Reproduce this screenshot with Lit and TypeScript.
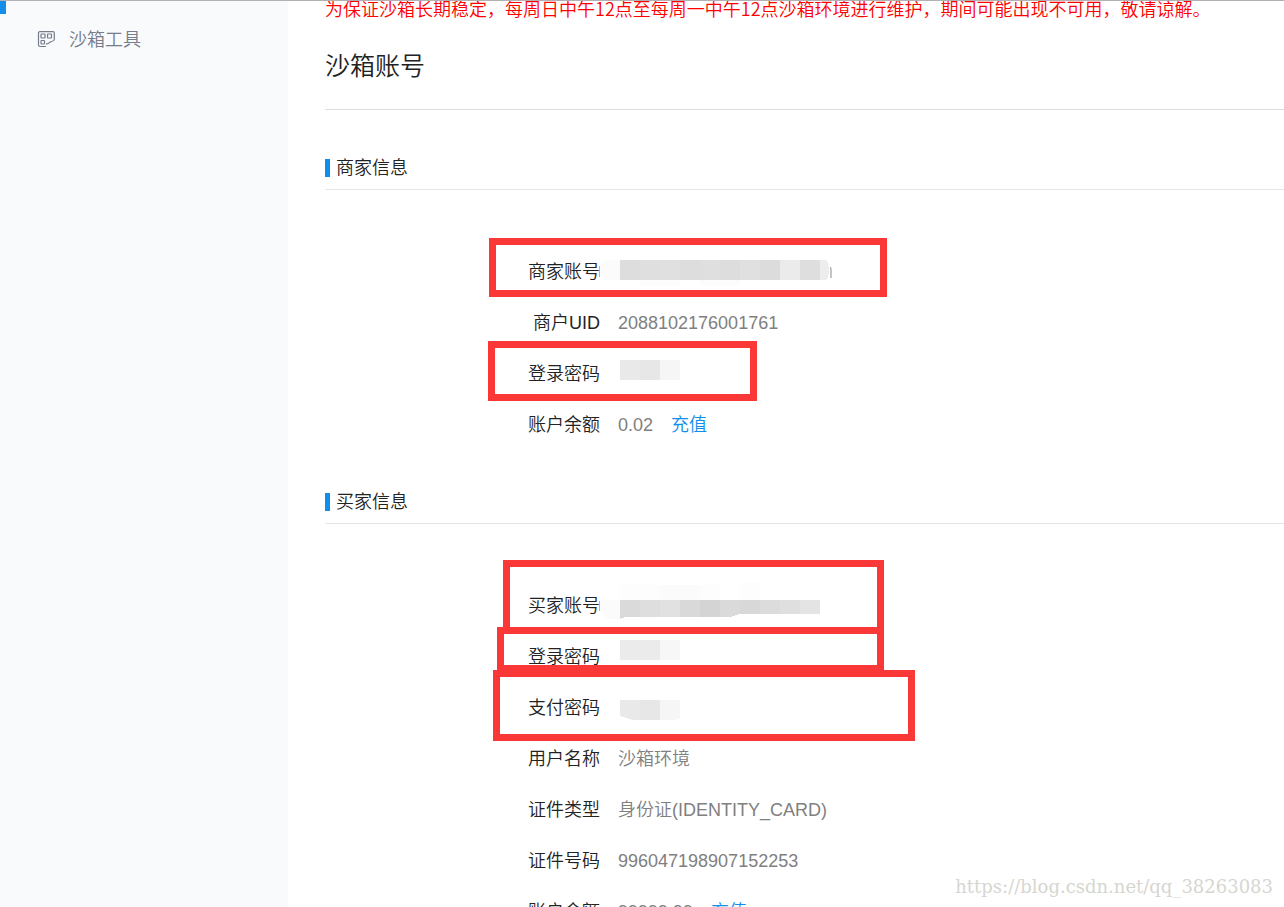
import { LitElement, html, css, svg, nothing } from "lit";
import { customElement, property } from "lit/decorators.js";

interface Field {
  label: string;
  value?: string;
  action?: string;
}

const merchant: Field[] = [
  { label: "商家账号" },
  { label: "商户UID", value: "2088102176001761" },
  { label: "登录密码" },
  { label: "账户余额", value: "0.02", action: "充值" },
];

const buyer: Field[] = [
  { label: "买家账号" },
  { label: "登录密码" },
  { label: "支付密码" },
  { label: "用户名称", value: "沙箱环境" },
  { label: "证件类型", value: "身份证(IDENTITY_CARD)" },
  { label: "证件号码", value: "996047198907152253" },
  { label: "账户余额", value: "99999.99", action: "充值" },
];

/* Mosaic blocks that hide private values: x, y, width, height, fill. */
const blocks: [number, number, number, number, string][] = [
  [620, 260, 20, 20, "#dddddd"],
  [640, 260, 20, 20, "#dfdfdf"],
  [660, 260, 20, 20, "#e0e0e0"],
  [680, 260, 20, 20, "#dddddd"],
  [700, 260, 20, 20, "#dfdfdf"],
  [720, 260, 20, 20, "#dddddd"],
  [740, 260, 20, 20, "#e0e0e0"],
  [760, 260, 20, 20, "#dcdcdc"],
  [780, 260, 20, 20, "#ebebeb"],
  [800, 260, 20, 20, "#dedede"],
  [640, 280, 40, 6, "#fdfdfd"],
  [700, 280, 40, 6, "#fcfcfc"],
  [620, 360, 20, 20, "#e9e9e9"],
  [640, 360, 20, 20, "#e7e7e7"],
  [660, 360, 20, 20, "#f6f6f6"],
  [620, 585, 100, 15, "#fdfdfd"],
  [660, 585, 40, 15, "#fbfbfb"],
  [740, 582, 20, 18, "#fdfdfd"],
  [640, 600, 20, 17, "#dedede"],
  [660, 600, 20, 17, "#e1e1e1"],
  [680, 600, 20, 17, "#d9d9d9"],
  [700, 600, 20, 17, "#d4d4d4"],
  [740, 600, 20, 14, "#d8d8d8"],
  [760, 600, 20, 14, "#dcdcdc"],
  [780, 600, 20, 14, "#dfdfdf"],
  [800, 600, 20, 14, "#e4e4e4"],
  [620, 640, 40, 20, "#ebebeb"],
  [660, 640, 20, 20, "#f7f7f7"],
  [640, 700, 20, 20, "#e7e7e7"],
];

/* Highlight frames: x, y, width, height of the outer edge. */
const frames: [number, number, number, number][] = [
  [489, 238, 398, 59],
  [488, 341, 269, 60],
  [503, 560, 381, 74],
  [497, 627, 387, 45],
  [493, 670, 422, 71],
];

@customElement("info-section")
export class InfoSection extends LitElement {
  @property() heading = "";
  @property({ attribute: false }) fields: Field[] = [];

  static styles = css`
    :host {
      display: block;
    }
    .title {
      display: flex;
      align-items: center;
      gap: 6px;
      margin: 0;
      padding-bottom: 10px;
      border-bottom: 1px solid #e5e5e5;
      font-size: 18px;
      line-height: 22px;
      font-weight: 350;
      color: #222;
    }
    .title::before {
      content: "";
      width: 5px;
      height: 18px;
      background: #108ee9;
    }
    .fields {
      margin: 0;
      padding-top: 57px;
    }
    .row {
      display: grid;
      grid-template-columns: 275px 1fr;
      column-gap: 18px;
      line-height: 51px;
      min-height: 51px;
    }
    .label {
      text-align: right;
      color: #222;
    }
    .value {
      display: flex;
      gap: 18px;
      margin: 0;
      color: #808080;
    }
    .action {
      color: #108ee9;
      text-decoration: none;
    }
  `;

  render() {
    return html`
      <h2 class="title">${this.heading}</h2>
      <dl class="fields">
        ${this.fields.map(
          (f) => html`
            <div class="row">
              <dt class="label">${f.label}</dt>
              <dd class="value">
                ${f.value ? html`<span>${f.value}</span>` : nothing}
                ${f.action ? html`<a class="action" href="#">${f.action}</a>` : nothing}
              </dd>
            </div>
          `,
        )}
      </dl>
    `;
  }
}

@customElement("app-root")
export class AppRoot extends LitElement {
  static styles = css`
    :host {
      display: flex;
      position: relative;
      box-sizing: border-box;
      height: 100vh;
      overflow: hidden;
      border-top: 1px solid #b3b0b3;
      background: #fff;
      font-family: "Liberation Sans", "Noto Sans CJK SC", sans-serif;
      font-size: 18px;
      font-weight: 350;
    }
    .sidebar {
      flex: 0 0 288px;
      background: #f8fafc;
    }
    .marker {
      width: 6px;
      height: 13px;
      background: #108ee9;
    }
    .tool {
      display: flex;
      align-items: center;
      gap: 14px;
      padding: 13px 0 0 37px;
      line-height: 26px;
      color: #777c8b;
      text-decoration: none;
    }
    .main {
      flex: 1;
      min-width: 0;
      padding-left: 37px;
    }
    .notice {
      margin: 0;
      line-height: 14px;
      white-space: nowrap;
      color: #f00;
      font-family: "Noto Sans CJK SC", sans-serif;
    }
    .heading {
      margin: 35px 0 47px;
      padding-bottom: 27px;
      border-bottom: 1px solid #ddd;
      font-size: 25px;
      line-height: 32px;
      font-weight: 350;
      color: #222;
    }
    .buyer {
      margin-top: 40px;
    }
    .annotations {
      position: absolute;
      top: -1px;
      left: 0;
      pointer-events: none;
    }
    .watermark {
      position: absolute;
      right: 11px;
      bottom: 8px;
      font-family: "DejaVu Serif", serif;
      font-size: 18px;
      line-height: 24px;
      color: #d6d6d0;
    }
  `;

  private annotations() {
    return svg`
      <g shape-rendering="crispEdges">
        ${blocks.map(([x, y, w, h, c]) => svg`<rect x=${x} y=${y} width=${w} height=${h} fill=${c}></rect>`)}
        <path d="M620 600h20v17h-15l-5 2z" fill="#dadada"></path>
        <path d="M720 600h20v14l-10 3h-10z" fill="#dadada"></path>
        <path d="M620 700h20v20h-8l-12-4z" fill="#e9e9e9"></path>
        <path d="M660 700h20v18l-6 2h-14z" fill="#f6f6f6"></path>
      </g>
      <path d="M620 260h-14q-6 3-6 10t6 10h14z" fill="#fbfbfb"></path>
      <path d="M820 260h6q3 2 3 10t-3 10h-6z" fill="#ededed"></path>
      <path d="M830 267q1 0 1 3v8" fill="none" stroke="#8a8a8a"></path>
      <path d="M599.500 266v11M599.500 601v10" stroke="#b5b5b5"></path>
      <path d="M620 600h-20q0 14 8 19h12z" fill="#fbfbfb"></path>
      ${frames.map(
        ([x, y, w, h]) => svg`
          <rect x=${x + 3.5} y=${y + 3.5} width=${w - 7} height=${h - 7}
            fill="none" stroke="#fb3838" stroke-width="7"></rect>`,
      )}
    `;
  }

  render() {
    return html`
      <nav class="sidebar">
        <div class="marker"></div>
        <a class="tool" href="#">
          <svg width="18" height="18" viewBox="0 0 18 18" fill="none" stroke="currentColor" stroke-width="1.2">
            <path d="M9 15.500H3Q1.500 15.500 1.500 14V1.500Q1.500 0.600 3 0.600H16Q17.300 0.600 17.300 2V8.500Q17.200 10 14.500 10.500Q13 11 12.500 11.500Q11.500 13 9 12.800"></path>
            <rect x="4" y="3" width="4" height="4" rx="0.500"></rect>
            <rect x="10.500" y="3" width="4" height="4" rx="0.500"></rect>
            <rect x="4" y="9.500" width="3.500" height="3.500" rx="0.500"></rect>
          </svg>
          <span>沙箱工具</span>
        </a>
      </nav>
      <main class="main">
        <p class="notice">为保证沙箱长期稳定，每周日中午12点至每周一中午12点沙箱环境进行维护，期间可能出现不可用，敬请谅解。</p>
        <h1 class="heading">沙箱账号</h1>
        <info-section heading="商家信息" .fields=${merchant}></info-section>
        <info-section class="buyer" heading="买家信息" .fields=${buyer}></info-section>
      </main>
      <svg class="annotations" width="1284" height="907" aria-hidden="true">${this.annotations()}</svg>
      <div class="watermark">https://blog.csdn.net/qq_38263083</div>
    `;
  }
}
